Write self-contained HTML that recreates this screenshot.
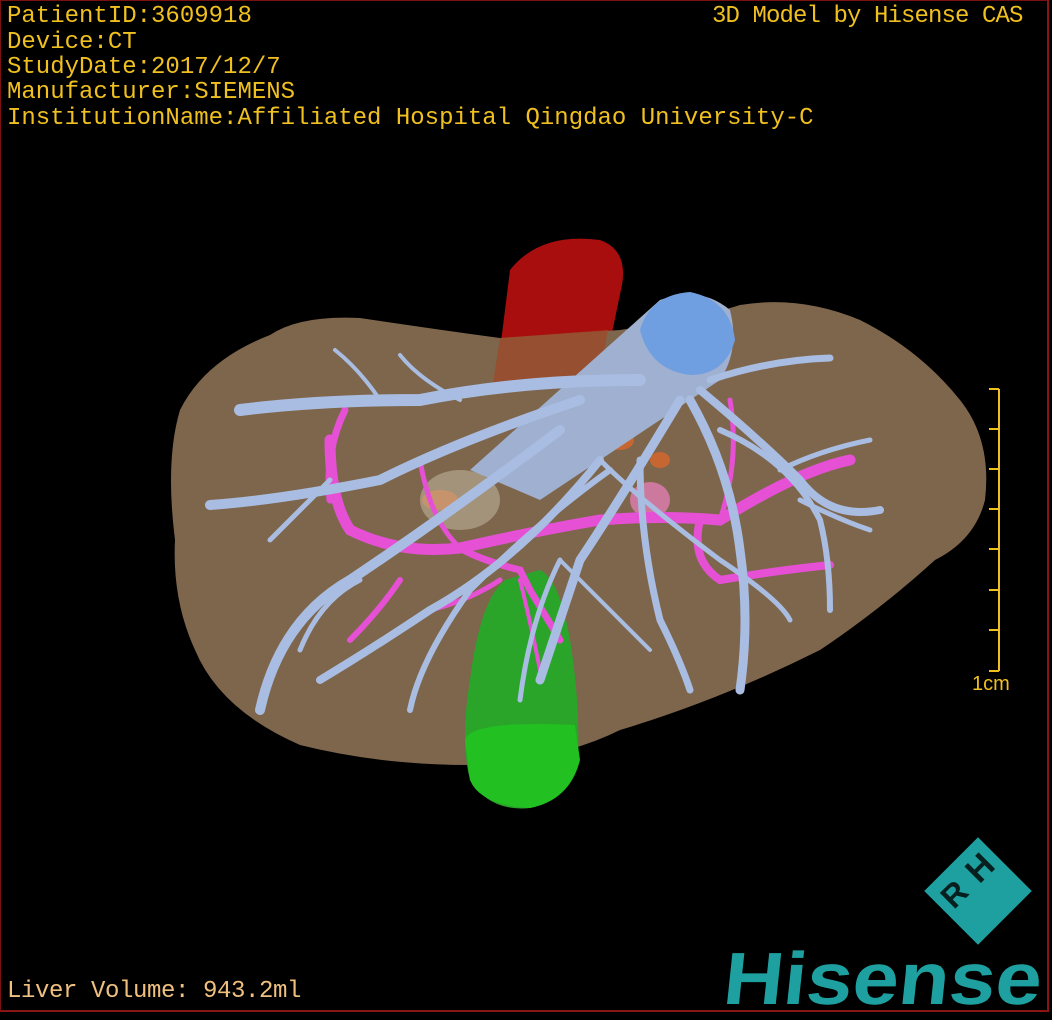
<!DOCTYPE html>
<html><head><meta charset="utf-8"><style>
html,body{margin:0;padding:0;background:#000;}
#w{position:relative;width:1052px;height:1020px;overflow:hidden;background:#000;}
#frame{position:absolute;left:0;top:0;width:1049px;height:1012px;border:1px solid #7a1010;border-right:2px solid #8a1515;border-bottom:2px solid #8a1515;box-sizing:border-box;}
.t{position:absolute;font-family:"Liberation Mono","Noto Sans CJK SC",monospace;font-size:24px;color:#f0c020;letter-spacing:0px;line-height:25px;white-space:nowrap;}
</style></head><body><div id="w">
<svg width="1052" height="1020" style="position:absolute;left:0;top:0">
<path d="M510 270 Q540 232 600 240 Q628 250 622 285 L600 390 L495 390 Z" fill="#a80e0e"/>
<path d="M180 410 Q205 360 270 335 Q300 315 360 318 Q440 330 500 338 L620 330 Q700 318 740 305 Q800 295 860 320 Q920 350 960 400 Q992 440 985 500 Q975 540 935 560 Q880 610 820 650 Q720 700 620 730 Q560 760 470 765 Q380 765 300 745 Q220 710 195 650 Q172 600 175 540 Q165 460 180 410 Z" fill="#7e664c"/>
<path d="M500 338 Q495 370 492 390 L598 385 L608 330 Z" fill="#9c4a2a" opacity="0.8"/>
<g fill="#d8682a" opacity="0.8"><ellipse cx="440" cy="500" rx="18" ry="10"/><ellipse cx="620" cy="440" rx="14" ry="10"/><ellipse cx="660" cy="460" rx="10" ry="8"/></g>
<ellipse cx="460" cy="500" rx="40" ry="30" fill="#c8c0a8" opacity="0.5"/>
<ellipse cx="650" cy="500" rx="20" ry="18" fill="#f080c0" opacity="0.7"/>
<path d="M505 580 Q480 600 470 680 Q460 740 470 780 Q490 812 530 808 Q570 800 578 760 Q580 700 570 640 Q560 580 540 570 Z" fill="#2aa52a"/>
<path d="M465 740 Q470 720 575 725 L580 760 Q570 800 530 808 Q480 805 470 780 Z" fill="#22c020"/>
<g stroke="#e550d5" fill="none" stroke-linecap="round">
<path d="M330 440 Q330 500 350 530 Q400 555 460 548 Q540 530 600 520 Q660 515 720 520 Q800 470 850 460" stroke-width="11"/>
<path d="M460 548 Q480 560 520 570 L530 590 L560 640" stroke-width="7"/>
<path d="M345 410 Q325 450 330 500" stroke-width="7"/>
<path d="M700 520 Q690 560 720 580 Q780 570 830 565" stroke-width="8"/>
<path d="M730 400 Q740 460 720 520" stroke-width="5"/>
<path d="M400 580 Q380 610 350 640" stroke-width="6"/>
<path d="M500 580 Q470 600 430 610" stroke-width="5"/>
<path d="M420 460 Q430 520 460 548" stroke-width="5"/>
<path d="M520 580 Q530 620 540 670" stroke-width="4"/>
</g>
<path d="M470 470 L660 300 Q700 285 730 310 Q740 350 720 380 L540 500 Z" fill="#9fb0d0"/>
<path d="M640 330 Q650 295 690 292 Q730 300 735 340 Q725 375 690 375 Q650 370 640 330 Z" fill="#6f9fe0"/>
<g stroke="#a9bde2" fill="none" stroke-linecap="round" stroke-linejoin="round">
<path d="M640 380 Q520 380 420 400 Q320 400 240 410" stroke-width="12"/>
<path d="M580 400 Q460 440 380 480 Q280 500 210 505" stroke-width="10"/>
<path d="M560 430 Q440 520 350 580 Q280 620 260 710" stroke-width="10"/>
<path d="M600 460 Q520 560 430 610 Q370 650 320 680" stroke-width="8"/>
<path d="M680 400 Q620 500 580 560 Q560 620 540 680" stroke-width="9"/>
<path d="M690 400 Q730 470 740 550 Q750 620 740 690" stroke-width="9"/>
<path d="M700 390 Q760 440 800 480 Q830 520 880 510" stroke-width="8"/>
<path d="M710 380 Q770 360 830 358" stroke-width="7"/>
<path d="M640 460 Q640 540 660 620 Q680 660 690 690" stroke-width="7"/>
<path d="M720 430 Q790 460 820 520 Q830 560 830 610" stroke-width="6"/>
<path d="M610 470 Q540 520 470 590 Q420 660 410 710" stroke-width="6"/>
<path d="M600 460 Q640 500 720 560 Q780 600 790 620" stroke-width="5"/>
<path d="M460 400 Q420 380 400 355" stroke-width="4"/>
<path d="M380 400 Q360 370 335 350" stroke-width="4"/>
<path d="M360 580 Q320 600 300 650" stroke-width="5"/>
<path d="M330 480 Q290 520 270 540" stroke-width="5"/>
<path d="M560 560 Q530 620 520 700" stroke-width="5"/>
<path d="M780 470 Q820 450 870 440" stroke-width="5"/>
<path d="M800 500 Q840 520 870 530" stroke-width="5"/>
<path d="M560 560 Q600 600 650 650" stroke-width="4"/>
</g>
<g stroke="#f0c020" stroke-width="2">
<line x1="999" y1="389" x2="999" y2="671"/>
<line x1="989" y1="389" x2="999" y2="389"/><line x1="989" y1="429" x2="999" y2="429"/><line x1="989" y1="469" x2="999" y2="469"/><line x1="989" y1="509" x2="999" y2="509"/><line x1="989" y1="549" x2="999" y2="549"/><line x1="989" y1="590" x2="999" y2="590"/><line x1="989" y1="630" x2="999" y2="630"/><line x1="989" y1="671" x2="999" y2="671"/>
</g>
<text x="972" y="690" font-family="Liberation Sans,sans-serif" font-size="20" fill="#f0c020">1cm</text>
<g transform="translate(978,891) rotate(-45)">
<rect x="-38" y="-38" width="76" height="76" fill="#1fa0a0"/>
</g>
<text transform="translate(988,876) rotate(-45)" font-family="Liberation Sans,sans-serif" font-size="34" font-weight="bold" fill="#062020" text-anchor="middle">H</text>
<text transform="translate(962,902) rotate(-45)" font-family="Liberation Sans,sans-serif" font-size="32" font-weight="bold" fill="#062020" text-anchor="middle">R</text>
<text x="722" y="1004" font-family="Liberation Sans,sans-serif" font-weight="bold" font-size="74" fill="#1fa0a0" textLength="318" lengthAdjust="spacingAndGlyphs" transform="skewX(-6) translate(105,0)">Hisense</text>
</svg>
<div id="frame"></div>
<div class="t" style="left:7px;top:4px">PatientID:3609918</div>
<div class="t" style="left:7px;top:30px">Device:CT</div>
<div class="t" style="left:7px;top:55px">StudyDate:2017/12/7</div>
<div class="t" style="left:7px;top:80px">Manufacturer:SIEMENS</div>
<div class="t" style="left:7px;top:106px">InstitutionName:Affiliated Hospital Qingdao University-C</div>
<div class="t" style="left:712px;top:4px;letter-spacing:-0.9px">3D Model by Hisense CAS</div>
<div class="t" style="left:7px;top:979px;color:#f0c080;letter-spacing:-0.4px">Liver Volume:  943.2ml</div>
</div></body></html>
